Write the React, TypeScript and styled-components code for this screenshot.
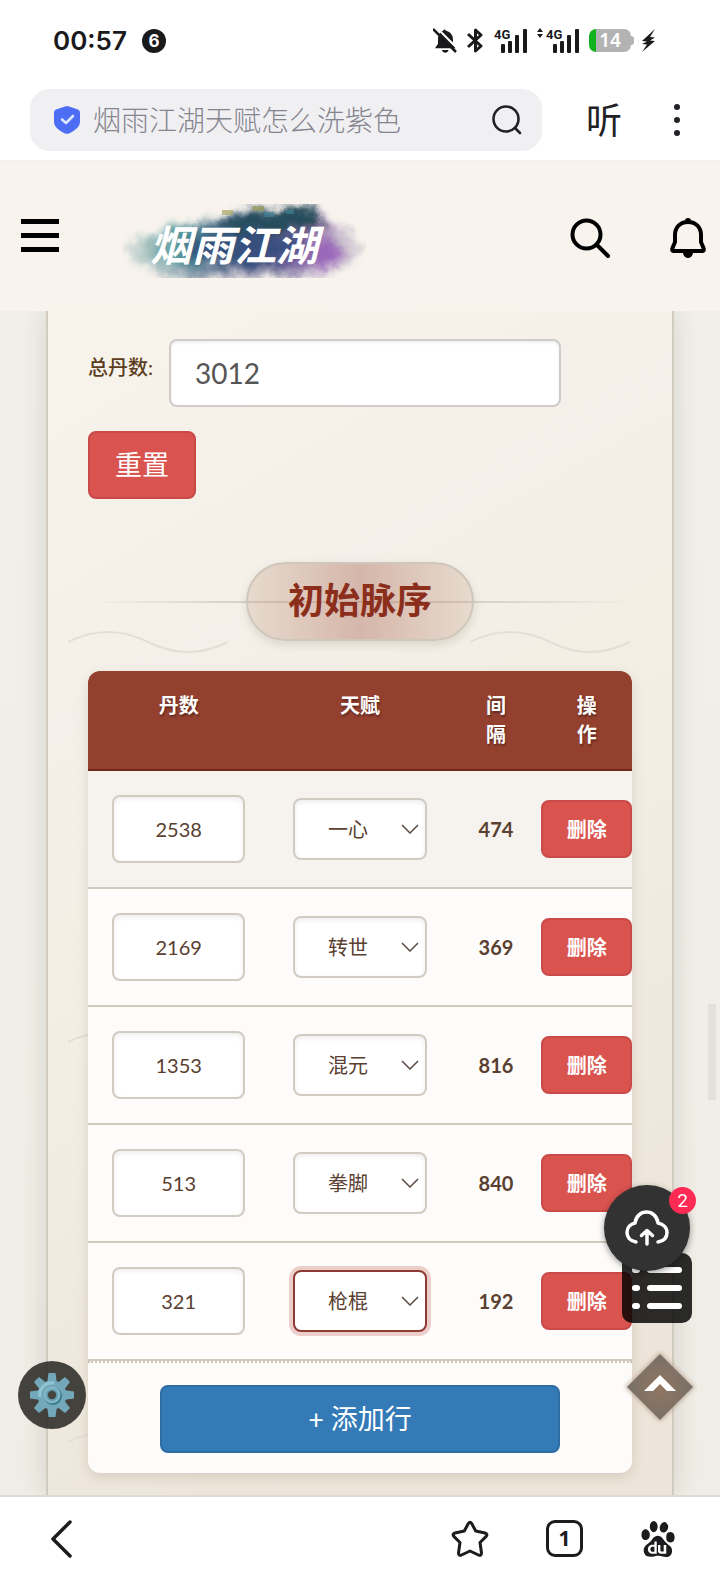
import { useState } from "react";
import styled, { createGlobalStyle, css } from "styled-components";
import { SiBaidu } from "react-icons/si";

const GlobalStyle = createGlobalStyle`
  * { box-sizing: border-box; }
  body {
    margin: 0;
    background: #efede7;
    font-family: Lato, "Noto Sans CJK SC", sans-serif;
    color: #5a4030;
  }
  button, input, select { font-family: inherit; }
  button { cursor: pointer; padding: 0; border: 0; background: none; }
  svg { display: block; }
`;

/* ── Shell ───────────────────────────────────────────── */

const Shell = styled.div`
  height: 100vh;
  display: flex;
  flex-direction: column;
  overflow: hidden;
`;

const StatusBar = styled.div`
  flex: none;
  height: 81px;
  padding: 0 64px 0 53px;
  display: flex;
  align-items: center;
  justify-content: space-between;
  background: #fff;
  color: #1a1a1c;
`;

const StatusGroup = styled.div<{ $gap: number }>`
  display: flex;
  align-items: center;
  gap: ${(p) => p.$gap}px;
`;

const Clock = styled.span`
  font: 600 26px/32px Inter, sans-serif;
`;

const NoticeCount = styled.span`
  width: 24px;
  height: 24px;
  border-radius: 50%;
  background: #1a1a1c;
  color: #fff;
  font: 700 17px/24px Inter, sans-serif;
  text-align: center;
`;

const Battery = styled.span`
  position: relative;
  width: 42px;
  height: 23px;
  border-radius: 7px;
  background: linear-gradient(90deg, #12b31f 7px, #b3b3b3 7px);
  color: #fff;
  font: 600 19px/23px "Noto Sans", sans-serif;
  text-align: center;
  &::after {
    content: "";
    position: absolute;
    left: 42px;
    top: 7px;
    width: 3px;
    height: 9px;
    border-radius: 0 3px 3px 0;
    background: #b3b3b3;
  }
`;

const AddressBar = styled.div`
  flex: none;
  height: 80px;
  padding: 8px 31px 9px 30px;
  display: flex;
  align-items: center;
  background: #fff;
  border-bottom: 1px solid #f3f0ec;
  color: #222226;
`;

const SearchPill = styled.form`
  flex: 1;
  height: 62px;
  padding: 0 20px 0 24px;
  display: flex;
  align-items: center;
  gap: 13px;
  border-radius: 20px;
  background: #f0f0f3;
`;

const SearchInput = styled.input`
  flex: 1;
  min-width: 0;
  padding: 0;
  border: 0;
  outline: 0;
  background: none;
  color: #85858f;
  font-size: 28px;
  font-weight: 300;
  line-height: 40px;
`;

const ListenButton = styled.button`
  margin: 0 43px 0 44px;
  color: #222226;
  font-size: 36px;
  line-height: 48px;
`;

const SiteHeader = styled.header`
  flex: none;
  height: 150px;
  padding: 0 14px 0 21px;
  display: flex;
  align-items: center;
  background: #f8f4ed;
`;

const LogoLink = styled.a`
  margin: 10px auto 0 63px;
`;

const HeaderButton = styled.button<{ $gap?: boolean }>`
  margin-top: 4px;
  margin-left: ${(p) => (p.$gap ? "60px" : "0")};
`;

/* ── Card ────────────────────────────────────────────── */

const Main = styled.main`
  flex: 1;
  min-height: 0;
  display: flex;
  overflow: hidden;
  padding: 0 46px;
  background: linear-gradient(180deg, #f1efe9, #efede5);
`;

const Card = styled.section`
  position: relative;
  flex: 1;
  min-width: 0;
  padding: 28px 40px 23px;
  border: solid #d2cbc0;
  border-width: 0 2px;
  background: linear-gradient(150deg, #f8f4ec 0%, #f4f0e9 28%, #f2eee2 50%, #ede5d9 85%);
  box-shadow: 0 0 24px rgba(60, 50, 40, 0.14);
`;

const WaveLayer = styled.svg`
  position: absolute;
  left: 0;
  top: 0;
  width: 100%;
  height: 100%;
  pointer-events: none;
`;

const CardBody = styled.div`
  position: relative;
`;

const FormRow = styled.div`
  display: flex;
  align-items: center;
  gap: 16px;
`;

const FieldLabel = styled.label`
  padding-bottom: 12px;
  font-size: 20px;
  font-weight: 500;
  line-height: 28px;
  white-space: nowrap;
  color: #5c3d1e;
`;

const TotalInput = styled.input`
  flex: 0 0 72%;
  min-width: 0;
  height: 68px;
  padding: 0 24px;
  border: 2px solid #d0cbcb;
  border-radius: 8px;
  background: #fff;
  box-shadow: inset 0 2px 3px rgba(0, 0, 0, 0.06);
  color: #555;
  font-size: 28px;
  outline: 0;
`;

const ActionButton = styled.button<{ $tone: "danger" | "primary" }>`
  height: 68px;
  padding: 0 25px;
  border: 2px solid ${(p) => (p.$tone === "danger" ? "#c94a48" : "#2e6da4")};
  border-radius: 8px;
  background: ${(p) => (p.$tone === "danger" ? "#d9534f" : "#337ab7")};
  color: #fff;
  font-size: 27px;
  line-height: 40px;
`;

const ResetButton = styled(ActionButton)`
  margin-top: 24px;
`;

const DeleteButton = styled(ActionButton)`
  display: block;
  width: 100%;
  height: 58px;
  padding: 0;
  font-size: 20px;
  font-weight: 700;
  line-height: 28px;
`;

const TitleRow = styled.div`
  margin: 63px 0 30px;
  display: flex;
  justify-content: center;
  background: linear-gradient(90deg, transparent, #cfc9bf 35%, #cfc9bf 65%, transparent) center / 100% 2px no-repeat;
`;

const SectionTitle = styled.h2`
  margin: 0;
  height: 79px;
  padding: 0 40px;
  border: 2px solid #cfc7bb;
  border-radius: 40px;
  background:
    linear-gradient(rgba(150, 120, 105, 0.25), rgba(150, 120, 105, 0.25)) center / 100% 2px no-repeat,
    linear-gradient(90deg, #e8dace, #d5b6aa 50%, #e8dace);
  box-shadow: 0 4px 10px rgba(80, 50, 30, 0.14);
  color: #8b2e1c;
  font-size: 36px;
  font-weight: 700;
  line-height: 73px;
`;

/* ── Table ───────────────────────────────────────────── */

const TablePanel = styled.div`
  overflow: hidden;
  border-radius: 12px;
  background: #fdfcfa;
  box-shadow: 0 4px 12px rgba(80, 60, 40, 0.14);
`;

const Table = styled.table`
  width: 100%;
  table-layout: fixed;
  border-collapse: separate;
  border-spacing: 0;
`;

const WideCol = styled.col`
  width: 33.3333%;
`;

const Th = styled.th`
  height: 100px;
  padding: 20px 28px;
  border-bottom: 2px solid #722417;
  background: #94402f;
  color: #fff;
  font-size: 20px;
  font-weight: 700;
  line-height: 29px;
  text-align: center;
  text-shadow: 1px 2px 2px rgba(0, 0, 0, 0.35);
  vertical-align: top;
`;

const Tr = styled.tr`
  &:first-child { background: #f6f3ee; }
`;

const Td = styled.td<{ $flush?: boolean }>`
  height: 118px;
  padding: ${(p) => (p.$flush ? "0" : "0 24px")};
  border-bottom: 2px solid #d0cabf;
  font-size: 20px;
  font-weight: 700;
  text-align: center;
  vertical-align: middle;
`;

const fieldBox = css`
  display: block;
  width: 100%;
  border: 2px solid #d2cbc2;
  border-radius: 8px;
  background: #fff;
  box-shadow: inset 0 2px 5px rgba(0, 0, 0, 0.08);
  color: #5a4030;
  font-size: 20px;
  outline: 0;
`;

const CountInput = styled.input`
  ${fieldBox}
  height: 68px;
  padding: 0;
  text-align: center;
`;

const SelectWrap = styled.div`
  position: relative;
`;

const TalentSelect = styled.select<{ $active: boolean }>`
  ${fieldBox}
  appearance: none;
  height: 62px;
  padding: 0 24px 0 0;
  text-align: center;
  text-align-last: center;
  ${(p) =>
    p.$active &&
    css`
      border-color: #8f3a33;
      box-shadow: 0 0 0 4px #eccfca;
    `}
`;

const SelectArrow = styled.svg`
  position: absolute;
  right: 8px;
  top: 26px;
  pointer-events: none;
`;

const TableFooter = styled.div`
  padding: 22px 72px 20px;
  border-top: 2px dotted #cfc8bc;
`;

const AddButton = styled(ActionButton)`
  display: block;
  width: 100%;
`;

/* ── Floating controls ───────────────────────────────── */

const CloudButton = styled.button`
  position: fixed;
  right: 30px;
  bottom: 311px;
  z-index: 3;
  width: 86px;
  height: 86px;
  display: grid;
  place-items: center;
  border-radius: 50%;
  background: #323232;
  box-shadow: 0 2px 6px rgba(0, 0, 0, 0.4);
`;

const CloudBadge = styled.span`
  position: absolute;
  right: -6px;
  top: 2px;
  width: 27px;
  height: 27px;
  border-radius: 50%;
  background: #ff2b55;
  color: #fff;
  font: 400 19px/27px Roboto, sans-serif;
  text-align: center;
`;

const ListButton = styled.button`
  position: fixed;
  right: 28px;
  bottom: 259px;
  z-index: 2;
  width: 70px;
  height: 70px;
  display: grid;
  place-items: center;
  border-radius: 10px;
  background: rgba(0, 0, 0, 0.82);
`;

const TopButton = styled.button`
  position: fixed;
  right: 23px;
  bottom: 158px;
  z-index: 2;
`;

const GearButton = styled.button`
  position: fixed;
  left: 18px;
  bottom: 153px;
  z-index: 2;
  width: 68px;
  height: 68px;
  display: grid;
  place-items: center;
  border-radius: 50%;
  background: rgba(35, 33, 30, 0.84);
`;

const ScrollThumb = styled.div`
  position: fixed;
  right: 4px;
  top: 1004px;
  width: 8px;
  height: 96px;
  background: #e4e1dd;
`;

/* ── Bottom bar ──────────────────────────────────────── */

const BottomBar = styled.nav`
  flex: none;
  height: 87px;
  padding: 0 44px 2px 50px;
  display: flex;
  align-items: center;
  gap: 57px;
  border-top: 2px solid #dddbd8;
  background: #fff;
  color: #1c1c1f;
`;

const NavButton = styled.button<{ $push?: boolean }>`
  color: inherit;
  ${(p) => p.$push && "margin-right: auto;"}
`;

const TabCount = styled.button`
  width: 37px;
  height: 37px;
  border: 3px solid #1c1c1f;
  border-radius: 9px;
  color: #1c1c1f;
  font: 700 21px/31px "Noto Sans", sans-serif;
`;

/* ── Drawings ────────────────────────────────────────── */

function BellOffIcon() {
  return (
    <svg width="24" height="25" viewBox="0 0 24 25" fill="#1a1a1c">
      <path d="M11 1.500a2 2 0 0 1 2 1.300c4.500 1 7 4.400 7 9v4l3 4.500H2l3-4.500v-4c0-4.600 2-8 5-9z" />
      <path d="M9 22h6.500c-.5 3.500-6 3.500-6.500 0z" />
      <path d="M2-2 26 22" stroke="#fff" strokeWidth="2" />
      <path d="M0 1 23 24" stroke="#1a1a1c" strokeWidth="2.500" />
    </svg>
  );
}

function BluetoothIcon() {
  return (
    <svg width="16" height="25" viewBox="0 0 16 25" fill="none" stroke="#1a1a1c" strokeWidth="3" strokeLinejoin="round">
      <path d="M1 6 14 18 8.500 23V2l5.500 5L1 19" />
    </svg>
  );
}

function SignalIcon({ arrows }: { arrows?: boolean }) {
  return (
    <svg width={arrows ? 42 : 34} height="31" viewBox={arrows ? "-9 -3 42 31" : "-1 -3 34 31"} fill="#1a1a1c">
      {arrows && <path d="M-9 4 L-6 0 L-3 4z M-9 6 L-6 10 L-3 6z" />}
      <text x="0" y="11" fontFamily="Roboto, sans-serif" fontSize="13" fontWeight="700">4G</text>
      <rect x="7" y="16" width="4" height="9" rx="1" />
      <rect x="14" y="13" width="4" height="12" rx="1" />
      <rect x="21" y="7" width="4" height="18" rx="1" />
      <rect x="29" y="1" width="4" height="24" rx="1" />
    </svg>
  );
}

function BoltIcon() {
  return (
    <svg width="15" height="25" viewBox="0 0 15 25" fill="#1a1a1c">
      <path d="M14 1 1 13l5 .500L1 16l5 .500L1 24l13-11-5-.500 5-3-5-.500z" />
    </svg>
  );
}

function ShieldIcon() {
  return (
    <svg width="26" height="28" viewBox="0 0 26 28" fill="none">
      <path d="M13 0q1 0 2 .4l9 3.200q2 .8 2 3v9c0 5-4 8.400-10.500 11.700q-2.500 1-5 0C4 24 0 20.600 0 15.600v-9q0-2.200 2-3L11 .4Q12 0 13 0z" fill="#4d6df5" />
      <path d="m8 13.500 4 3.500 7-7" stroke="#dbe8ff" strokeWidth="2.600" strokeLinecap="round" strokeLinejoin="round" />
    </svg>
  );
}

function Logo() {
  return (
    <svg width="244" height="74" viewBox="0 0 244 74" role="img" aria-label="烟雨江湖">
      <defs>
        <filter id="ink" x="-20%" y="-30%" width="140%" height="160%">
          <feTurbulence type="fractalNoise" baseFrequency="0.05" numOctaves="5" seed="8" result="n" />
          <feGaussianBlur in="SourceGraphic" stdDeviation="4" result="b" />
          <feDisplacementMap in="b" in2="n" scale="20" xChannelSelector="R" yChannelSelector="G" />
        </filter>
        <linearGradient id="wash" x1="0" x2="1">
          <stop offset="0" stopColor="#b5c4c4" />
          <stop offset="0.180" stopColor="#4a9496" />
          <stop offset="0.400" stopColor="#355a7d" />
          <stop offset="0.650" stopColor="#4b4f86" />
          <stop offset="0.820" stopColor="#8a62ab" />
          <stop offset="1" stopColor="#c4bfc6" />
        </linearGradient>
      </defs>
      <g filter="url(#ink)">
        <path d="M2 46 22 30 74 18 124 4 196 2 214 18 242 44 226 62 196 74 50 76 16 60z" fill="url(#wash)" opacity="0.500" />
        <path d="M18 44 44 28 84 20 130 6 188 4 206 20 222 40 212 58 180 66 60 64 30 54z" fill="url(#wash)" opacity="0.850" />
        <path d="M90 22 130 6 192 2 204 20 176 28 110 28z" fill="#264e5c" />
        <ellipse cx="125" cy="44" rx="62" ry="16" fill="#2f4b79" opacity="0.750" />
        <ellipse cx="204" cy="50" rx="14" ry="14" fill="#9659bb" opacity="0.700" />
        <ellipse cx="100" cy="68" rx="76" ry="4" fill="#a39fb8" opacity="0.600" />
      </g>
      <path d="M100 6h11v5h-11zM130 2h12v5h-12z" fill="#9d994b" opacity="0.600" />
      <path d="M142 8h10v5h-10zM164 6h8v4h-8z" fill="#417d96" opacity="0.700" />
      <text x="28" y="57" fill="#fff" fontFamily="'Noto Sans CJK SC', sans-serif" fontSize="42" fontWeight="700" fontStyle="italic">
        烟雨江湖
      </text>
    </svg>
  );
}

function GearIcon() {
  return (
    <svg width="44" height="44" viewBox="-22 -22 44 44">
      <g fill="#73a8ba">
        {[0, 45, 90, 135, 180, 225, 270, 315].map((a) => (
          <path key={a} d="M-5-11-3.500-22h7L5-11z" transform={`rotate(${a})`} />
        ))}
        <circle r="14.500" />
      </g>
      <path d="M-12 2A12 12 0 0 1 2-12" fill="none" stroke="#91c4d3" strokeWidth="3" />
      <circle cx="1" cy="1" r="9" fill="#35788e" />
      <circle r="8.500" fill="#82b5c5" />
      <circle r="6" fill="#639cae" />
      <circle r="4.200" fill="#45443f" />
    </svg>
  );
}

/* ── Data ────────────────────────────────────────────── */

interface TalentRow {
  count: number;
  talent: string;
  gap: number;
}

const TALENTS = ["一心", "转世", "混元", "拳脚", "枪棍"];

const INITIAL_ROWS: TalentRow[] = [
  { count: 2538, talent: "一心", gap: 474 },
  { count: 2169, talent: "转世", gap: 369 },
  { count: 1353, talent: "混元", gap: 816 },
  { count: 513, talent: "拳脚", gap: 840 },
  { count: 321, talent: "枪棍", gap: 192 },
];

/* ── Page ────────────────────────────────────────────── */

export default function App() {
  const [rows, setRows] = useState(INITIAL_ROWS);
  const [active, setActive] = useState(4);

  const update = (index: number, patch: Partial<TalentRow>) =>
    setRows(rows.map((r, i) => (i === index ? { ...r, ...patch } : r)));

  return (
    <Shell>
      <GlobalStyle />
      <StatusBar>
        <StatusGroup $gap={15}>
          <Clock>00:57</Clock>
          <NoticeCount>6</NoticeCount>
        </StatusGroup>
        <StatusGroup $gap={10}>
          <BellOffIcon />
          <BluetoothIcon />
          <SignalIcon />
          <SignalIcon arrows />
          <Battery>14</Battery>
          <BoltIcon />
        </StatusGroup>
      </StatusBar>

      <AddressBar>
        <SearchPill>
          <ShieldIcon />
          <SearchInput aria-label="搜索" defaultValue="烟雨江湖天赋怎么洗紫色" />
          <button type="button" aria-label="搜索">
            <svg width="30" height="30" viewBox="0 0 30 30" fill="none" stroke="#222226" strokeWidth="2.600" strokeLinecap="round">
              <circle cx="14" cy="14" r="12.500" />
              <path d="m23 23 5 5" />
            </svg>
          </button>
        </SearchPill>
        <ListenButton>听</ListenButton>
        <button aria-label="更多">
          <svg width="24" height="34" viewBox="0 0 24 34" fill="#222226">
            <circle cx="12" cy="4" r="3" />
            <circle cx="12" cy="17" r="3" />
            <circle cx="12" cy="30" r="3" />
          </svg>
        </button>
      </AddressBar>

      <SiteHeader>
        <button aria-label="菜单">
          <svg width="38" height="40" viewBox="0 0 38 40" fill="#000">
            <path d="M0 3h38v5H0zM0 17h38v5H0zM0 31h38v5H0z" />
          </svg>
        </button>
        <LogoLink href="#">
          <Logo />
        </LogoLink>
        <HeaderButton aria-label="站内搜索">
          <svg width="40" height="40" viewBox="0 0 40 40" fill="none" stroke="#000" strokeWidth="4" strokeLinecap="round">
            <circle cx="16.500" cy="16.500" r="14" />
            <path d="M27 27 38 38" />
          </svg>
        </HeaderButton>
        <HeaderButton $gap aria-label="通知">
          <svg width="36" height="40" viewBox="0 0 36 40" fill="none" stroke="#000" strokeWidth="4" strokeLinejoin="round">
            <path d="M18 4C10 4 5 9.500 5 17v7L2.500 30Q1.500 33 4 33h28q2.500 0 1.500-3L31 24v-7C31 9.500 26 4 18 4z" />
            <circle cx="18" cy="3" r="3" fill="#000" stroke="none" />
            <path d="M13 34h10c0 8-10 8-10 0z" fill="#000" stroke="none" />
          </svg>
        </HeaderButton>
      </SiteHeader>

      <Main>
        <Card>
          <WaveLayer aria-hidden="true">
            <defs>
              <pattern id="waves" width="402" height="400" patternUnits="userSpaceOnUse">
                <path d="M20 331Q60 311 100 331T180 331" fill="none" stroke="#e4dfd6" strokeWidth="2" />
              </pattern>
            </defs>
            <rect width="100%" height="100%" fill="url(#waves)" />
          </WaveLayer>
          <CardBody>
            <FormRow>
              <FieldLabel htmlFor="total">总丹数:</FieldLabel>
              <TotalInput id="total" defaultValue="3012" />
            </FormRow>
            <ResetButton $tone="danger" onClick={() => setRows(INITIAL_ROWS)}>重置</ResetButton>

            <TitleRow>
              <SectionTitle>初始脉序</SectionTitle>
            </TitleRow>

            <TablePanel>
              <Table>
                <colgroup>
                  <WideCol />
                  <WideCol />
                  <col />
                  <col />
                </colgroup>
                <thead>
                  <tr>
                    <Th>丹数</Th>
                    <Th>天赋</Th>
                    <Th>间隔</Th>
                    <Th>操作</Th>
                  </tr>
                </thead>
                <tbody>
                  {rows.map((row, i) => (
                    <Tr key={i}>
                      <Td>
                        <CountInput
                          aria-label="丹数"
                          value={row.count}
                          onChange={(e) => update(i, { count: Number(e.target.value) || 0 })}
                        />
                      </Td>
                      <Td>
                        <SelectWrap>
                          <TalentSelect
                            aria-label="天赋"
                            $active={active === i}
                            value={row.talent}
                            onFocus={() => setActive(i)}
                            onChange={(e) => update(i, { talent: e.target.value })}
                          >
                            {TALENTS.map((t) => <option key={t}>{t}</option>)}
                          </TalentSelect>
                          <SelectArrow width="18" height="10" viewBox="0 0 18 10" fill="none" stroke="#5a4a40" strokeWidth="1.500">
                            <path d="m1 1 8 8 8-8" />
                          </SelectArrow>
                        </SelectWrap>
                      </Td>
                      <Td $flush>{row.gap}</Td>
                      <Td $flush>
                        <DeleteButton $tone="danger" onClick={() => setRows(rows.filter((_, n) => n !== i))}>
                          删除
                        </DeleteButton>
                      </Td>
                    </Tr>
                  ))}
                </tbody>
              </Table>
              <TableFooter>
                <AddButton $tone="primary" onClick={() => setRows([...rows, { count: 0, talent: "一心", gap: 0 }])}>
                  + 添加行
                </AddButton>
              </TableFooter>
            </TablePanel>
          </CardBody>
        </Card>
      </Main>

      <ScrollThumb />
      <CloudButton aria-label="上传">
        <svg width="44" height="36" viewBox="0 0 44 36" fill="none" stroke="#fff" strokeWidth="3.500" strokeLinecap="round" strokeLinejoin="round">
          <path d="M11 32C5 31 2 27 2 22.500c0-5 3.500-8.500 8-9.500C11 6 16 2 21.500 2S32 6 33 13c5 1 9 4.500 9 9.500S39 31 33 32" />
          <path d="M22 34V21M16.500 25.500 22 20.500l5.500 5" />
        </svg>
        <CloudBadge>2</CloudBadge>
      </CloudButton>
      <ListButton aria-label="目录">
        <svg width="50" height="42" viewBox="0 0 50 42" fill="#fff">
          {[0, 18, 36].map((y) => (
            <g key={y}>
              <rect x="0" y={y} width="8" height="6" rx="3" />
              <rect x="15" y={y} width="35" height="6" rx="3" />
            </g>
          ))}
        </svg>
      </ListButton>
      <TopButton aria-label="返回顶部">
        <svg width="74" height="74" viewBox="0 0 74 74">
          <defs>
            <filter id="soft"><feGaussianBlur stdDeviation="2" /></filter>
            <radialGradient id="warm">
              <stop offset="0" stopColor="#92765f" />
              <stop offset="1" stopColor="#777069" />
            </radialGradient>
          </defs>
          <path d="M37 2 72 37 37 72 2 37z" fill="#b49a87" filter="url(#soft)" opacity="0.700" />
          <path d="M37 4 70 37 37 70 4 37z" fill="url(#warm)" />
          <path d="M37 25 53 41H44l-7-7-7 7h-9z" fill="#fff" />
        </svg>
      </TopButton>
      <GearButton aria-label="设置">
        <GearIcon />
      </GearButton>

      <BottomBar>
        <NavButton $push aria-label="返回">
          <svg width="24" height="38" viewBox="0 0 24 38" fill="none" stroke="currentColor" strokeWidth="3.500" strokeLinecap="round" strokeLinejoin="round">
            <path d="M20 2 3 19l17 17" />
          </svg>
        </NavButton>
        <NavButton aria-label="收藏">
          <svg width="38" height="38" viewBox="0 0 38 38" fill="none" stroke="currentColor" strokeWidth="3" strokeLinejoin="round">
            <path d="M17.300 3.500q1.700-2.500 3.400 0l4 7.500 9.300 2q3 1 1.200 3.400L29 22.500l1.500 10.500q0 3-3 2L19 31l-8.500 4q-3 1-3-2L9 22.500l-6.200-6.100Q1 14 4 13l9.300-2z" />
          </svg>
        </NavButton>
        <TabCount aria-label="标签页">1</TabCount>
        <NavButton aria-label="百度首页">
          <SiBaidu size={36} />
        </NavButton>
      </BottomBar>
    </Shell>
  );
}
